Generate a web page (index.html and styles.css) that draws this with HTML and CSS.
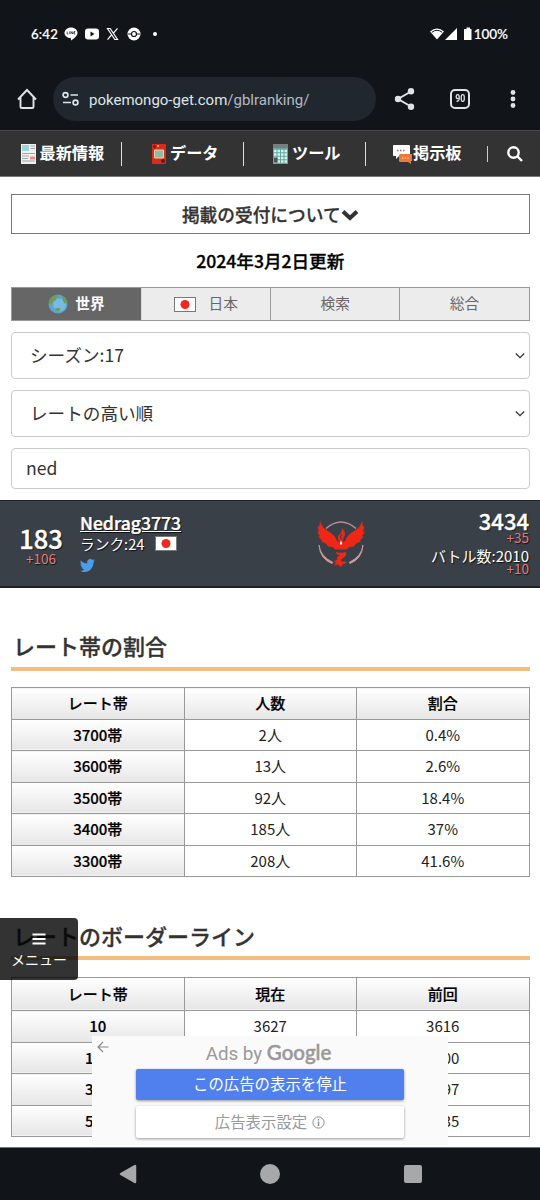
FILE: index.html
```
<!DOCTYPE html>
<html lang="ja">
<head>
<meta charset="utf-8">
<title>GBLランキング</title>
<link rel="stylesheet" href="styles.css">
</head>
<body>
<svg class="defs" width="0" height="0">
  <symbol id="flag" viewBox="0 0 22 15"><rect x=".5" y=".5" width="21" height="14" fill="#fff" stroke="#77797b"/><circle cx="11" cy="7.5" r="4.5" fill="#f0281e"/></symbol>
  <symbol id="caret" viewBox="0 0 12 8"><path d="M1.8 1.5 6 5.7l4.200-4.200" fill="none" stroke="#333" stroke-width="1.300"/></symbol>
</svg>
<div class="phone">
  <header class="status">
    <span class="clock">6:42</span>
    <svg class="notes" width="100" height="16" viewBox="0 0 100 16">
      <path d="M7 1.500c3.700 0 6.500 2.400 6.500 5.500 0 2.800-3.200 5.300-6.500 7.500v-2.300C3.300 12 .5 9.800.5 7S3.300 1.500 7 1.500z" fill="#fff"/>
      <path d="M3.200 5.500V8h1.300M5.700 5.500V8M7 8V5.500L8.700 8V5.500M11.300 5.500H10V8h1.300M10 6.800h1.100" stroke="#111418" stroke-width=".7" fill="none"/>
      <rect x="21" y="2.500" width="14" height="11" rx="3" fill="#fff"/><path d="M26.500 5.500v5l4-2.500z" fill="#111418"/>
      <path d="M43.500 2.500h2.700l7.300 11h-2.700z" fill="none" stroke="#fff" stroke-width="1.200"/><path d="m53.500 2.300-4.300 5M47.500 9l-4 4.700" stroke="#fff" stroke-width="1.200"/>
      <circle cx="70" cy="8" r="6.500" fill="#fff"/><path d="M64 8h3.500M72.500 8H76" stroke="#111418"/><circle cx="70" cy="8" r="2.500" fill="#fff" stroke="#111418" stroke-width="1.200"/>
      <circle cx="91" cy="8" r="2" fill="#fff"/>
    </svg>
    <span class="grow"></span>
    <svg width="44" height="14" viewBox="0 0 44 14">
      <path d="M0 4.500Q7-1.500 14 4.500L7 12.500z" fill="#fff"/><path d="M1.800 5.300q5.200-4 10.400 0" fill="none" stroke="#111418"/>
      <path d="M27 1v12H15z" fill="#fff"/><path d="M36.500.500h3.500V2h1.500v11H34V2h2.500z" fill="#fff"/>
    </svg>
    <span class="battery">100%</span>
  </header>
  <div class="toolbar">
    <svg class="home" width="20" height="22" viewBox="0 0 20 22"><path d="M1 11.500 10 2l9 9.500M3.500 9.500v9.200q0 1.300 1.300 1.300h10.400q1.300 0 1.300-1.300V9.500" fill="none" stroke="#dfe3e8" stroke-width="1.900"/></svg>
    <div class="url">
      <svg width="18" height="16" viewBox="0 0 18 16" fill="none" stroke="#dfe3e8" stroke-width="1.700"><circle cx="3.500" cy="4" r="2.400"/><path d="M8.500 4H16M1 11.500h8"/><circle cx="13.500" cy="11.500" r="2.400"/></svg>
      <span class="address">pokemongo-get.com<span class="path">/gblranking/</span></span>
    </div>
    <svg class="share" width="22" height="22" viewBox="0 0 22 22" fill="#dfe3e8"><path d="M17 3.500 4 11l13 7.500" fill="none" stroke="#dfe3e8" stroke-width="2"/><circle cx="17" cy="3.300" r="3.200"/><circle cx="4" cy="11" r="3.200"/><circle cx="17" cy="18.700" r="3.200"/></svg>
    <span class="count"><span class="digits">90</span></span>
    <svg class="dots" width="6" height="20" viewBox="0 0 6 20" fill="#dfe3e8"><circle cx="3" cy="3.500" r="2.400"/><circle cx="3" cy="10" r="2.400"/><circle cx="3" cy="16.500" r="2.400"/></svg>
  </div>
  <nav class="site-nav">
    <a class="item"><svg width="17" height="20" viewBox="0 0 17 20"><path d="M1 0h15v20H1z" fill="#f0f0ee"/><path d="M2 1h7v6H2z" fill="#9fd4dc"/><path d="M10.500 2H15M10.500 4.500H15M2 9.500h13M2 12h7M2 14.500h6M2 17h13" stroke="#a3a5a8"/><path d="M10 12.500h5v3h-5z" fill="#e98f8c"/></svg><span>最新情報</span></a>
    <a class="item data"><svg width="15" height="20" viewBox="0 0 15 20"><rect width="14" height="20" rx="1" fill="#dc2a1e"/><path d="M2.500 6h9v8h-9z" fill="#93bba0" stroke="#e9d5aa"/><circle cx="2.500" cy="2.500" r="1.500" fill="#6b2030"/><path d="M5 2h2" stroke="#e8a332" stroke-width="2"/><circle cx="11" cy="17" r="2" fill="#651818"/></svg><span>データ</span></a>
    <a class="item tool"><svg width="16" height="20" viewBox="0 0 16 20"><path d="M0 0h15v20H0z" fill="#62a8a3"/><path d="M0 0h15v4H0z" fill="#777e80"/><path d="M1 7h13M1 10.500h13M1 14h13M1 17.500h13" stroke="#d6f0ed" stroke-width="2.400" stroke-dasharray="2.500 1"/><path d="M1 13.500h3.500v5H1z" fill="#4c5558"/></svg><span>ツール</span></a>
    <a class="item board"><svg width="20" height="20" viewBox="0 0 20 20"><path d="M1 1h15q1 0 1 1v9q0 1-1 1H6l-3 3v-3H1q-1 0-1-1V2q0-1 1-1z" fill="#fff"/><path d="M4 6.500h8" stroke="#777" stroke-width="1.500" stroke-dasharray="1.500 1.500"/><path d="M7 10h12v7h-1v3l-3-2H7q-1 0-1-1v-6z" fill="#ed7a3c"/><path d="M9 14h7" stroke="#fbd5b8" stroke-dasharray="1.500 1.300"/></svg><span>掲示板</span></a>
    <a class="search"><svg width="18" height="18" viewBox="0 0 18 18" fill="none" stroke="#fff" stroke-width="2.400"><circle cx="7.500" cy="7.500" r="5.200"/><path d="m11.500 11.500 4.500 4.500"/></svg></a>
  </nav>
  <main class="content">
    <div class="notice">掲載の受付について<svg width="18" height="12" viewBox="0 0 18 12"><path d="m2 2.500 7 6.500 7-6.500" fill="none" stroke="#333" stroke-width="4"/></svg></div>
    <p class="updated">2024年3月2日更新</p>
    <div class="tabs">
      <div class="tab active"><svg width="20" height="20" viewBox="0 0 20 20"><circle cx="10" cy="10" r="9.500" fill="#5ba4cf"/><circle cx="11.500" cy="11" r="6.500" fill="#75bce2"/><path d="M1 8C2 4 5 1.500 9 1l1 2-3 1 1 2-3 1-1 3-2 1zM14 2q4 2 5 6l-2 2-2-3zM7 14l6 .5-2 2.500-3-.5z" fill="#76994a"/></svg><span>世界</span></div>
      <div class="tab japan"><svg width="22" height="15"><use href="#flag"/></svg><span>日本</span></div>
      <div class="tab"><span>検索</span></div>
      <div class="tab"><span>総合</span></div>
    </div>
    <div class="field select"><span>シーズン:17</span><svg width="12" height="8"><use href="#caret"/></svg></div>
    <div class="field select"><span>レートの高い順</span><svg width="12" height="8"><use href="#caret"/></svg></div>
    <div class="field input"><span>ned</span></div>
    <section class="player">
      <div class="rank"><strong>183</strong><span class="delta">+106</span></div>
      <div class="who">
        <a class="name">Nedrag3773</a>
        <div class="level">ランク:24<svg width="22" height="15"><use href="#flag"/></svg></div>
        <svg class="bird" width="15" height="13" viewBox="0 0 15 13"><path d="M15 1.600l-1.500 1.700C13.500 9 9.500 13 4.700 13 3 13 1.400 12.500 0 11.700c1.700.1 3.200-.3 4.400-1.300-1.400 0-2.400-.9-2.800-2.100h1.300C1.400 7.900.500 6.700.500 5.200l1.300.4C.4 4.600.1 2.800.9 1.400 2.500 3.300 4.600 4.400 7.200 4.500 6.700 2 8.200 0 10.300 0c.9 0 1.700.4 2.200 1l2-.7-1.300 1.600z" fill="#4a9ee8"/></svg>
      </div>
      <svg class="team" width="48" height="46" viewBox="0 0 48 46">
        <path d="M9 7.500Q24-5.500 39 7.500" fill="none" stroke="#b98b99" stroke-width="1.400"/>
        <path d="M2 24q1 11 14 17.500l-1 1Q3 38 2 24zM46 24q-1 11-14 17.500l1 1Q45 38 46 24z" fill="#cf9aa5" stroke="#cf9aa5" stroke-width=".8"/>
        <path d="M3 0q2 7 8 10 7 4 9 10l4 2 4-2q2-6 9-10 6-3 8-10l1 6 1.500-1-1.500 6 2-.5-3 5 2 0-4 4 1 1-5 2-2 3-5 .5-2 2.500h-12l-2-2.500-5-.5-2-3-5-2 1-1-4-4 2 0-3-5 2 .5L.5 5 2 6z" fill="#ee2717"/>
        <path d="M25 7q5 6 2 9-1 1-1 5l-2 3-2-4q-3-4 1-7 2-2 2-6z" fill="#ee2717"/><path d="M25 13q-3 3-.5 6M20.500 16v4M28 16v4" fill="none" stroke="#3a4047"/><path d="m24 19.500 1.200 3-1.200 1.500-1.200-1.500z" fill="#fff"/>
        <path d="M19 31q5 1.500 10 0 1 4-3 6-2 1-2 3 2 1.500 5 0 0 2-1 3l-2 0-2 3-3-2.500-4 .500 2-2.500-2-1.500 3-1q-1-3 3-5-4 0-4-3z" fill="#ee2717"/>
      </svg>
      <div class="score"><strong>3434</strong><span class="delta">+35</span><span class="battles">バトル数:2010</span><span class="delta">+10</span></div>
    </section>
    <h2 class="heading">レート帯の割合</h2>
    <table class="rates">
      <tr><th>レート帯</th><th>人数</th><th>割合</th></tr>
      <tr><th>3700帯</th><td>2人</td><td>0.4%</td></tr>
      <tr><th>3600帯</th><td>13人</td><td>2.6%</td></tr>
      <tr><th>3500帯</th><td>92人</td><td>18.4%</td></tr>
      <tr><th>3400帯</th><td>185人</td><td>37%</td></tr>
      <tr><th>3300帯</th><td>208人</td><td>41.6%</td></tr>
    </table>
    <h2 class="heading second">レートのボーダーライン</h2>
    <table class="rates border-line">
      <tr><th>レート帯</th><th>現在</th><th>前回</th></tr>
      <tr><th>10</th><td>3627</td><td>3616</td></tr>
      <tr><th>100</th><td>3500</td><td>3500</td></tr>
      <tr><th>300</th><td>3397</td><td>3397</td></tr>
      <tr><th>500</th><td>3335</td><td>3335</td></tr>
    </table>
  </main>
  <footer class="system-nav">
    <svg width="18" height="20" viewBox="0 0 18 20"><path d="M16 2v16L2 10z" fill="#a6a8aa" stroke="#a6a8aa" stroke-width="2.500" stroke-linejoin="round"/></svg>
    <span class="round"></span><span class="square"></span>
  </footer>
  <div class="menu"><svg width="14" height="12" viewBox="0 0 14 12"><path d="M.5 1.500h13M.5 6h13M.5 10.500h13" stroke="#fff" stroke-width="2"/></svg>メニュー</div>
  <aside class="ad">
    <svg class="back" width="12" height="12" viewBox="0 0 12 12"><path d="M11.500 6H1.500M6 1 1 6l5 5" fill="none" stroke="#888" stroke-width="1.200"/></svg>
    <div class="by">Ads by <span class="brand">Google</span></div>
    <div class="stop"><span>この広告の表示を停止</span></div>
    <div class="why"><span>広告表示設定</span><svg width="13" height="13" viewBox="0 0 13 13" fill="none" stroke="#8d8d8d"><circle cx="6.500" cy="6.500" r="5.600"/><path d="M6.500 5.500V10M6.500 3v1.500" stroke-width="1.500"/></svg></div>
  </aside>
</div>
</body>
</html>
```
FILE: styles.css
```
* { box-sizing: border-box; }
body { margin: 0; background: #fff; font-family: "Noto Sans CJK JP", sans-serif; color: #333; }
svg { display: block; flex: none; }
.defs { position: absolute; }
.phone { position: relative; width: 540px; height: 1200px; overflow: hidden; display: flex; flex-direction: column; }
.grow { flex: 1; }

.status { height: 68px; background: #111418; color: #fff; display: flex; align-items: center; padding: 0 32px 0 31px; font: 500 13px/16px Lato, sans-serif; }
.clock { width: 33px; font-size: 13.2px; letter-spacing: .2px; -webkit-text-stroke: .2px; }
.battery { font-size: 13.5px; -webkit-text-stroke: .2px; }
.toolbar { height: 62px; background: #111418; display: flex; align-items: center; padding: 0 0 0 17px; }
.url { width: 323px; height: 44px; margin-left: 16px; border-radius: 22px; background: #21272f; display: flex; align-items: center; padding-left: 9px; gap: 9px; }
.address { padding-top: 2px; font: 15px/20px Roboto, sans-serif; color: #dfe3e8; white-space: nowrap; }
.path { color: #b4bac2; }
.share { margin-left: 18px; }
.count { width: 20px; height: 20px; margin-left: 34px; border: 2px solid #dfe3e8; border-radius: 5px; color: #dfe3e8; font: bold 11px/16px Roboto, sans-serif; display: flex; justify-content: center; }
.digits { transform: scaleX(.8); }
.dots { margin-left: 40px; }

.site-nav { height: 47px; background: #333; border-top: 1px solid #484848; border-bottom: 1px solid #777; display: flex; align-items: center; color: #fff; font-weight: bold; font-size: 16.2px; line-height: 24px; }
.item { width: 122px; height: 24px; display: flex; align-items: center; border-right: 1.5px solid #ddd; padding-left: 20px; gap: 2.5px; white-space: nowrap; }
.item span { padding-bottom: 3px; }
.item.data { padding-left: 30px; gap: 3px; }
.item.tool { padding-left: 29px; gap: 3px; }
.item.board { padding-left: 27px; gap: 0; border: 0; }
.search { height: 16px; border-left: 1px solid #ccc; margin-left: -1px; padding-left: 18px; }
.search svg { margin-top: -1px; }

.content { height: 970px; padding: 17px 10.5px 0 11px; overflow: hidden; }
.notice { height: 40px; border: 1px solid #777; display: flex; justify-content: center; align-items: center; font-weight: 500; font-size: 17.7px; padding-bottom: 1px; -webkit-text-stroke: .3px; }
.notice svg { margin-top: 3px; }
.updated { margin: 14px 0; height: 25px; font-weight: 500; font-size: 17.6px; line-height: 25px; color: #000; text-align: center; -webkit-text-stroke: .3px; }
.tabs { height: 34px; border: 1px solid #999; display: grid; grid-template-columns: repeat(4, 1fr); background: #ececec; font-size: 14.7px; line-height: 22px; color: #666; }
.tab { display: flex; align-items: center; justify-content: center; gap: 7px; border-left: 1px solid #999; }
.tab span { padding-bottom: 3px; }
.tab.active { background: #666; color: #fff; font-weight: bold; border: 0; }
.tab.japan { gap: 12px; border-color: #ddd; }
.field { height: 47px; margin-top: 11px; border: 1px solid #ccc; border-radius: 4px; display: flex; align-items: center; justify-content: space-between; font-size: 17.6px; padding: 0 3px 0 18px; }
.field span { padding-bottom: 2px; }
.field.input { height: 41px; padding-left: 14px; }

.player { height: 88px; margin: 10.5px -10.5px 0 -11px; background: #3a4047; border-bottom: 2px solid #1e2124; border-top: 1px solid #22262a; color: #fff; display: flex; text-shadow: 1px 1px 1px #111; }
.rank { width: 82px; padding-top: 22px; display: flex; flex-direction: column; align-items: center; }
.rank strong { font-size: 25.5px; line-height: 29px; font-weight: 500; -webkit-text-stroke: .4px; }
.delta { color: #e47c7c; font-size: 13.5px; line-height: 12px; }
.who { width: 237px; margin-left: -2px; padding-top: 10px; }
.name { display: block; font-weight: 500; font-size: 17.6px; line-height: 23px; text-decoration: underline; -webkit-text-stroke: .2px; }
.level { display: flex; align-items: center; gap: 11px; font-size: 14.7px; line-height: 20px; }
.bird { margin-top: 5px; }
.team { margin-top: 20px; }
.score { flex: 1; padding: 6px 11px 0 0; display: flex; flex-direction: column; align-items: flex-end; }
.score strong { font-size: 22px; line-height: 26px; font-weight: 500; -webkit-text-stroke: .4px; }
.score .delta { line-height: 9px; }
.battles { font-size: 15px; line-height: 24px; padding-top: 2px; margin-bottom: -4px; }

.heading { height: 39px; margin: 44px 0 16.5px; border-bottom: 4px solid #f4bd81; font-weight: 500; font-size: 22px; line-height: 26px; padding-left: 2px; -webkit-text-stroke: .3px; }
.heading.second { height: 38px; margin-top: 45px; }
.rates { width: 100%; border-collapse: collapse; table-layout: fixed; font-size: 15px; line-height: 20px; color: #000; }
.rates th, .rates td { height: 31.5px; padding: 0; border: 1px solid #999; text-align: center; }
.rates td { color: #222; }
.rates th { font-weight: 500; background: linear-gradient(#fff, #e6e6e6); -webkit-text-stroke: .2px; }
.border-line tr:first-child th { height: 33.5px; }

.system-nav { height: 53px; background: #111418; border-top: 1px solid #777; display: flex; align-items: center; padding-left: 119px; }
.round { width: 20px; height: 20px; border-radius: 50%; background: #a6a8aa; margin-left: 123px; }
.square { width: 18px; height: 18px; border-radius: 2px; background: #a6a8aa; margin-left: 124px; }

.menu { position: absolute; left: 0; top: 918px; width: 78px; height: 62px; background: rgba(0,0,0,.8); border-radius: 0 4px 4px 0; color: #fff; font-size: 14px; line-height: 20px; display: flex; flex-direction: column; align-items: center; padding-top: 15px; gap: 4px; }
.ad { position: absolute; left: 92px; top: 1036px; width: 356px; height: 109px; background: #fafafa; display: flex; flex-direction: column; align-items: center; }
.back { position: absolute; left: 5px; top: 5px; }
.by { height: 33px; margin-left: -3px; font: 18.8px/33px Roboto, sans-serif; color: #999; }
.brand { font-family: Lato, sans-serif; font-weight: 500; font-size: 20.5px; -webkit-text-stroke: .5px; }
.stop, .why { width: 268px; height: 31px; border-radius: 2px; background: #5080ed; color: #fff; font-size: 15.4px; line-height: 22px; display: flex; align-items: center; justify-content: center; box-shadow: 0 1px 3px #0006; }
.stop span { padding-bottom: 3px; }
.why { height: 32px; margin-top: 6px; background: #fff; color: #999; gap: 5px; }
.why span { padding-bottom: 2px; }
```
